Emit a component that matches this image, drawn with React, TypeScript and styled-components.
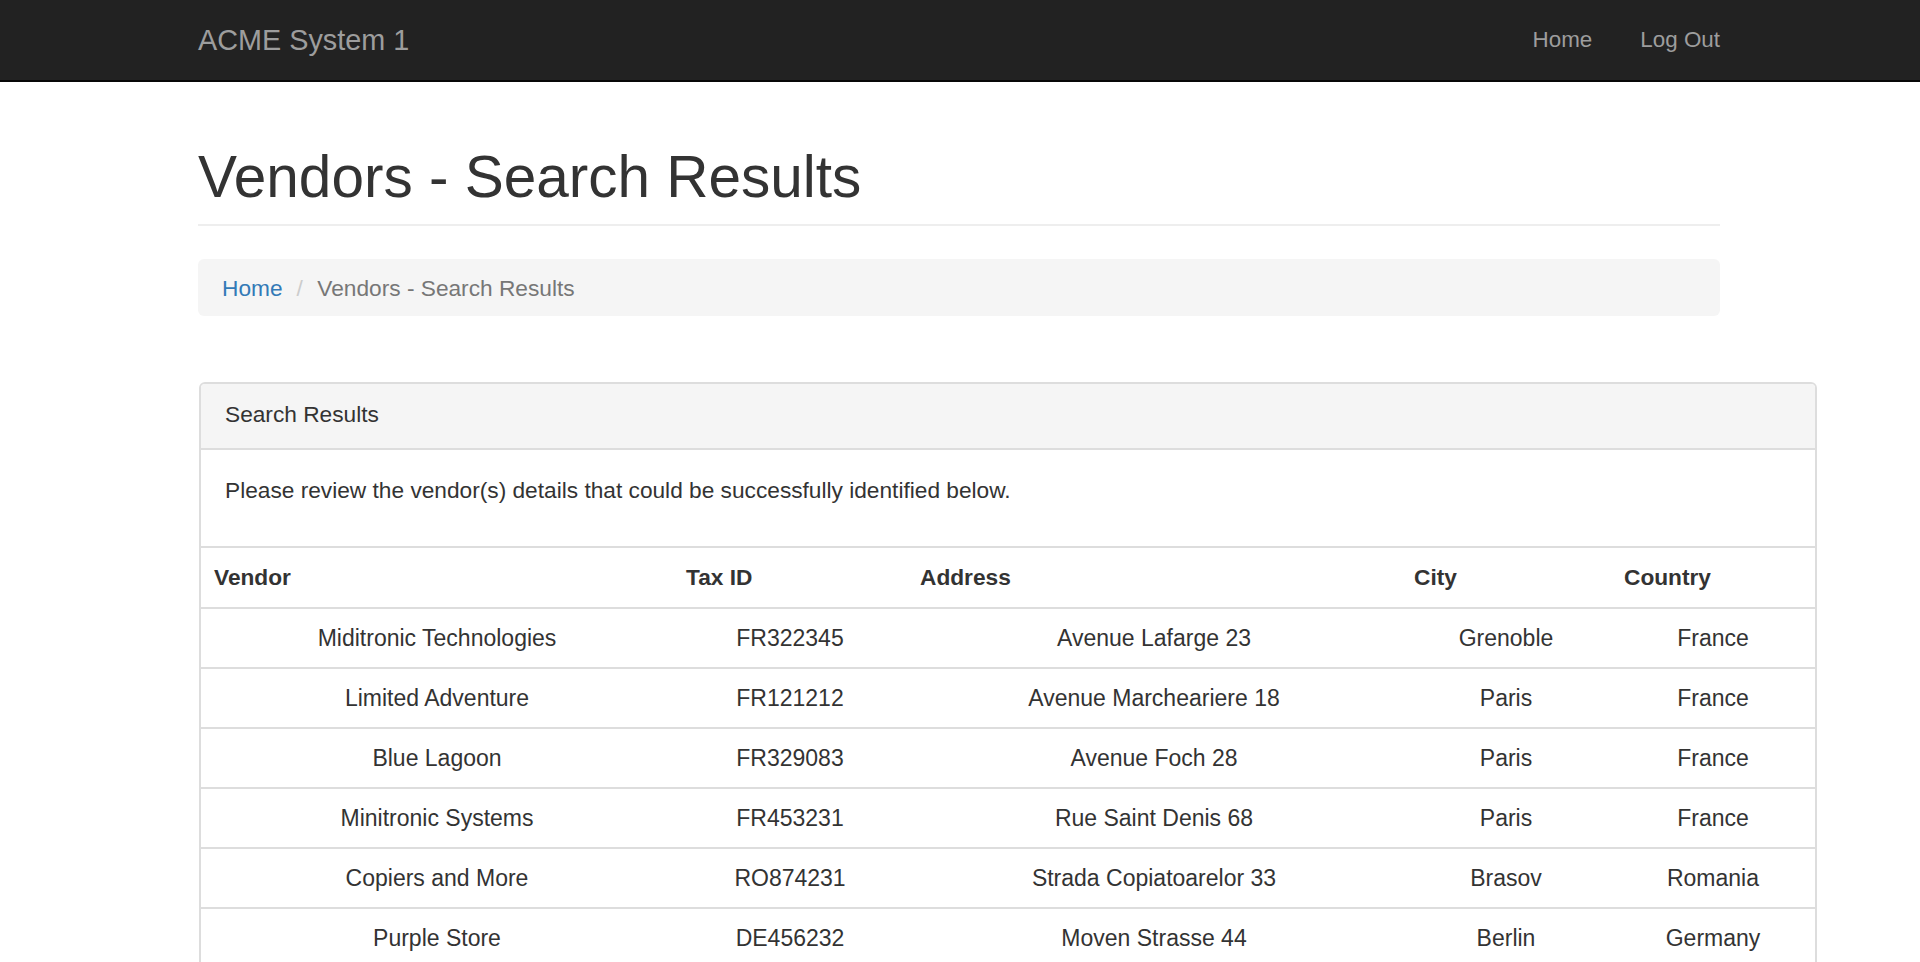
import React from "react";
import styled, { createGlobalStyle } from "styled-components";

const GlobalStyle = createGlobalStyle`
  html, body {
    margin: 0;
    padding: 0;
    background: #fff;
  }
  body {
    font-family: "Liberation Sans", Arial, Helvetica, sans-serif;
    font-size: 22.7px;
    line-height: 32px;
    color: #333;
  }
  * { box-sizing: border-box; }
`;

const Navbar = styled.nav`
  background: #222;
  border-bottom: 2px solid #080808;
  height: 82px;
`;

const NavInner = styled.div`
  width: 1522px;
  margin-left: 198px;
  display: flex;
  justify-content: space-between;
  align-items: flex-start;
`;

const Brand = styled.a`
  font-size: 28.8px;
  line-height: 32px;
  padding: 24px 0;
  color: #9d9d9d;
  text-decoration: none;
`;

const NavLinks = styled.ul`
  list-style: none;
  margin: 0 -24px 0 0;
  padding: 0;
  display: flex;
`;

const NavLink = styled.a`
  display: block;
  padding: 24px 24px;
  font-size: 22.4px;
  line-height: 32px;
  color: #9d9d9d;
  text-decoration: none;
`;

const Container = styled.main`
  width: 1522px;
  margin-left: 198px;
  padding-bottom: 40px;
`;

const PageHeader = styled.div`
  margin: 63px 0 33px;
  padding-bottom: 16px;
  border-bottom: 2px solid #eee;
`;

const Title = styled.h1`
  margin: 0;
  font-size: 58.5px;
  line-height: 63px;
  font-weight: 500;
  color: #333;
`;

const Breadcrumb = styled.div`
  background: #f5f5f5;
  border-radius: 6px;
  padding: 12.5px 24px;
  line-height: 32px;
  margin-bottom: 66px;
`;

const CrumbLink = styled.a`
  color: #337ab7;
  text-decoration: none;
`;

const CrumbSep = styled.span`
  color: #ccc;
  padding: 0 14.5px 0 14px;
`;

const CrumbActive = styled.span`
  color: #777;
`;

const Panel = styled.section`
  width: 1618px;
  margin-left: 1px;
  border: 2px solid #ddd;
  border-radius: 6px;
  background: #fff;
  overflow: hidden;
`;

const PanelHeading = styled.div`
  background: #f5f5f5;
  padding: 14px 24px 18px;
  line-height: 32px;
  border-bottom: 2px solid #ddd;
  color: #333;
`;

const PanelBody = styled.div`
  padding: 24px 24px 24px;
`;

const Paragraph = styled.p`
  margin: 0 0 16px;
`;

const Table = styled.table`
  width: 100%;
  border-collapse: collapse;
  table-layout: fixed;
`;

const HeadCell = styled.th`
  text-align: left;
  font-weight: bold;
  padding: 13px 13px 14px;
  line-height: 32px;
  border-top: 2px solid #ddd;
  border-bottom: 2px solid #ddd;
`;

const Cell = styled.td<{ $align?: string }>`
  text-align: ${(p) => p.$align ?? "center"};
  padding: 13px 13px;
  line-height: 32px;
  border-top: 2px solid #ddd;
  font-size: 23px;
`;

const vendors = [
  ["Miditronic Technologies", "FR322345", "Avenue Lafarge 23", "Grenoble", "France"],
  ["Limited Adventure", "FR121212", "Avenue Marcheariere 18", "Paris", "France"],
  ["Blue Lagoon", "FR329083", "Avenue Foch 28", "Paris", "France"],
  ["Minitronic Systems", "FR453231", "Rue Saint Denis 68", "Paris", "France"],
  ["Copiers and More", "RO874231", "Strada Copiatoarelor 33", "Brasov", "Romania"],
  ["Purple Store", "DE456232", "Moven Strasse 44", "Berlin", "Germany"],
];

const columns = [
  { label: "Vendor", width: 472 },
  { label: "Tax ID", width: 234 },
  { label: "Address", width: 494 },
  { label: "City", width: 210 },
  { label: "Country", width: 204 },
];

export default function App() {
  return (
    <>
      <GlobalStyle />
      <Navbar>
        <NavInner>
          <Brand href="#">ACME System 1</Brand>
          <NavLinks>
            <li>
              <NavLink href="#">Home</NavLink>
            </li>
            <li>
              <NavLink href="#">Log Out</NavLink>
            </li>
          </NavLinks>
        </NavInner>
      </Navbar>
      <Container>
        <PageHeader>
          <Title>Vendors - Search Results</Title>
        </PageHeader>
        <Breadcrumb>
          <CrumbLink href="#">Home</CrumbLink>
          <CrumbSep>/</CrumbSep>
          <CrumbActive>Vendors - Search Results</CrumbActive>
        </Breadcrumb>
        <Panel>
          <PanelHeading>Search Results</PanelHeading>
          <PanelBody>
            <Paragraph>
              Please review the vendor(s) details that could be successfully identified below.
            </Paragraph>
          </PanelBody>
          <Table>
            <colgroup>
              {columns.map((c) => (
                <col key={c.label} style={{ width: c.width }} />
              ))}
            </colgroup>
            <thead>
              <tr>
                {columns.map((c) => (
                  <HeadCell key={c.label}>{c.label}</HeadCell>
                ))}
              </tr>
            </thead>
            <tbody>
              {vendors.map((row) => (
                <tr key={row[1]}>
                  {row.map((v, i) => (
                    <Cell key={i}>{v}</Cell>
                  ))}
                </tr>
              ))}
            </tbody>
          </Table>
        </Panel>
      </Container>
    </>
  );
}
